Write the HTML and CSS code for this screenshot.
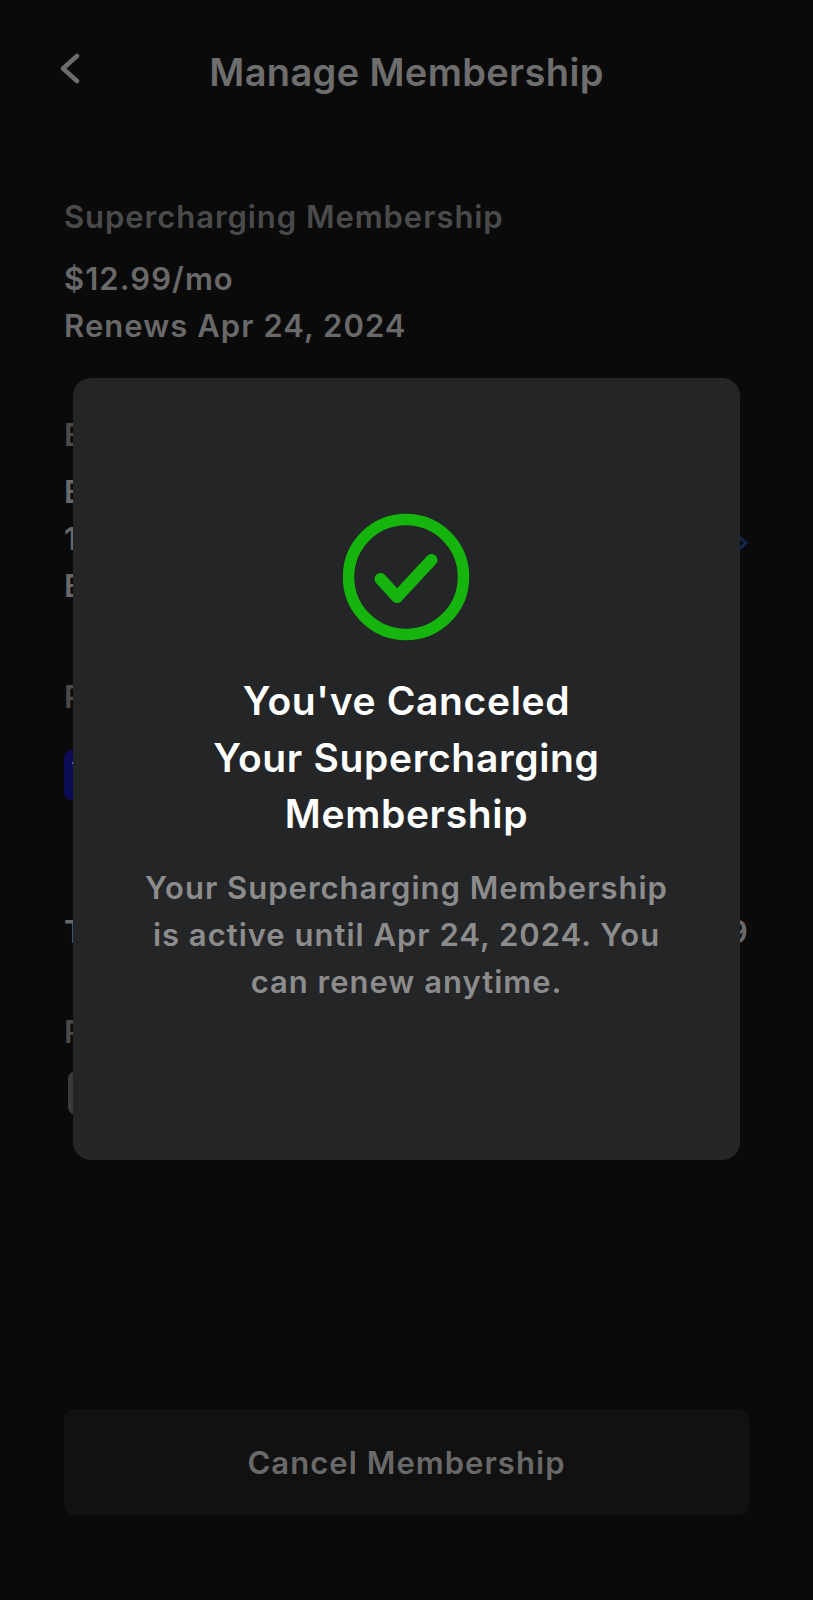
FILE: index.html
```html
<!DOCTYPE html>
<html lang="en">
<head>
    <meta charset="UTF-8">
    <meta name="viewport" content="width=device-width, initial-scale=1.0">
    <title>Manage Membership</title>
    <link rel="stylesheet" href="styles.css">
</head>
<body>
    <div class="page">
        <header class="top-bar">
            <svg class="back-icon" width="20" height="32" viewBox="0 0 20 32">
                <path d="M17 3 L3 15.5 L17 28" fill="none" stroke="#6c6c6c" stroke-width="4.5" stroke-linecap="round" stroke-linejoin="round"/>
            </svg>
            <h1>Manage Membership</h1>
        </header>

        <section class="block first-block">
            <h2>Supercharging Membership</h2>
            <p>$12.99/mo</p>
            <p>Renews Apr 24, 2024</p>
        </section>

        <section class="block address-block">
            <h2>Billing</h2>
            <div class="row">
                <div>
                    <p>Elon Musk</p>
                    <p>1 Tesla Road</p>
                    <p>Bastrop</p>
                </div>
                <svg class="edit-icon" width="14" height="18" viewBox="0 0 14 18">
                    <path d="M3 2 L11 9 L3 16" fill="none" stroke="#14264e" stroke-width="3"/>
                </svg>
            </div>
        </section>

        <section class="block promo-block">
            <h2>Plan</h2>
            <div class="promo-chip">Tier</div>
        </section>

        <div class="row total-row">
            <p>Total</p>
            <p>99</p>
        </div>

        <section class="block pay-block">
            <h2>Payment</h2>
            <div class="card-chip"></div>
        </section>

        <button class="cancel-button">Cancel Membership</button>
    </div>

    <div class="modal">
        <svg class="check-icon" width="128" height="128" viewBox="0 0 128 128">
            <circle cx="63" cy="64" r="57.5" fill="none" stroke="#15b50e" stroke-width="11.5"/>
            <path d="M37.5 66 L54 84 L88.5 47" fill="none" stroke="#15b50e" stroke-width="12" stroke-linecap="round" stroke-linejoin="round"/>
        </svg>
        <h2>You've Canceled<br>Your Supercharging<br>Membership</h2>
        <p>Your Supercharging Membership<br>is active until Apr 24, 2024. You<br>can renew anytime.</p>
    </div>
</body>
</html>
```

FILE: styles.css
```css
html, body {
    margin: 0;
    height: 1600px;
    background-color: #0a0a0b;
    overflow: hidden;
}

body {
    font-family: Inter, "Liberation Sans", sans-serif;
    position: relative;
}

.page {
    height: 1600px;
    box-sizing: border-box;
    padding: 50px 64px 0;
    display: flex;
    flex-direction: column;
}

.top-bar {
    position: relative;
    text-align: center;
    height: 44px;
}

.top-bar h1 {
    margin: 0;
    font-size: 38px;
    line-height: 44px;
    font-weight: 600;
    letter-spacing: 0.35px;
    color: #6e6e6e;
}

.back-icon {
    position: absolute;
    left: -4px;
    top: 3px;
}

.block h2 {
    margin: 0 0 19px;
    font-size: 31px;
    line-height: 38px;
    font-weight: 600;
    letter-spacing: 0.95px;
    color: #4a4a4a;
}

.block p, .total-row p {
    margin: 0;
    font-size: 31px;
    line-height: 47px;
    font-weight: 600;
    letter-spacing: 1.05px;
    color: #696969;
}

.row {
    display: flex;
    justify-content: space-between;
    align-items: center;
}

.edit-icon {
    margin-top: 8px;
}

.first-block {
    margin-top: 104px;
}

.address-block {
    margin-top: 67px;
}

.address-block h2 {
    margin-bottom: 14px;
}

.promo-block {
    margin-top: 69px;
}

.promo-block h2 {
    margin-bottom: 34px;
}

.promo-chip {
    width: 200px;
    height: 50px;
    box-sizing: border-box;
    padding: 8px 0 0 7px;
    border-radius: 8px;
    background-color: #0b0c55;
    font-size: 22px;
    line-height: 24px;
    color: #8f90b8;
}

.total-row {
    margin-top: 108px;
}

.pay-block {
    margin-top: 58px;
}

.pay-block h2 {
    margin-bottom: 20px;
}

.card-chip {
    width: 80px;
    height: 44px;
    margin-left: 4px;
    border-radius: 8px;
    background-color: #3a3a3a;
}

.cancel-button {
    position: absolute;
    left: 64px;
    top: 1409px;
    width: 685px;
    height: 106px;
    border: none;
    border-radius: 10px;
    background-color: #111112;
    font-family: inherit;
    font-size: 31px;
    font-weight: 600;
    letter-spacing: 1.05px;
    color: #696969;
}

.modal {
    position: absolute;
    left: 73px;
    top: 378px;
    width: 667px;
    height: 782px;
    box-sizing: border-box;
    padding-top: 135px;
    border-radius: 18px;
    background-color: #242527;
    text-align: center;
}

.check-icon {
    display: block;
    margin: 0 auto 32px;
}

.modal h2 {
    margin: 0;
    font-size: 39px;
    line-height: 56.5px;
    font-weight: 600;
    letter-spacing: 0.65px;
    color: #ffffff;
}

.modal p {
    margin: 21px 0 0;
    font-size: 31px;
    line-height: 47px;
    font-weight: 600;
    letter-spacing: 1px;
    color: #8c8c8d;
}
```
